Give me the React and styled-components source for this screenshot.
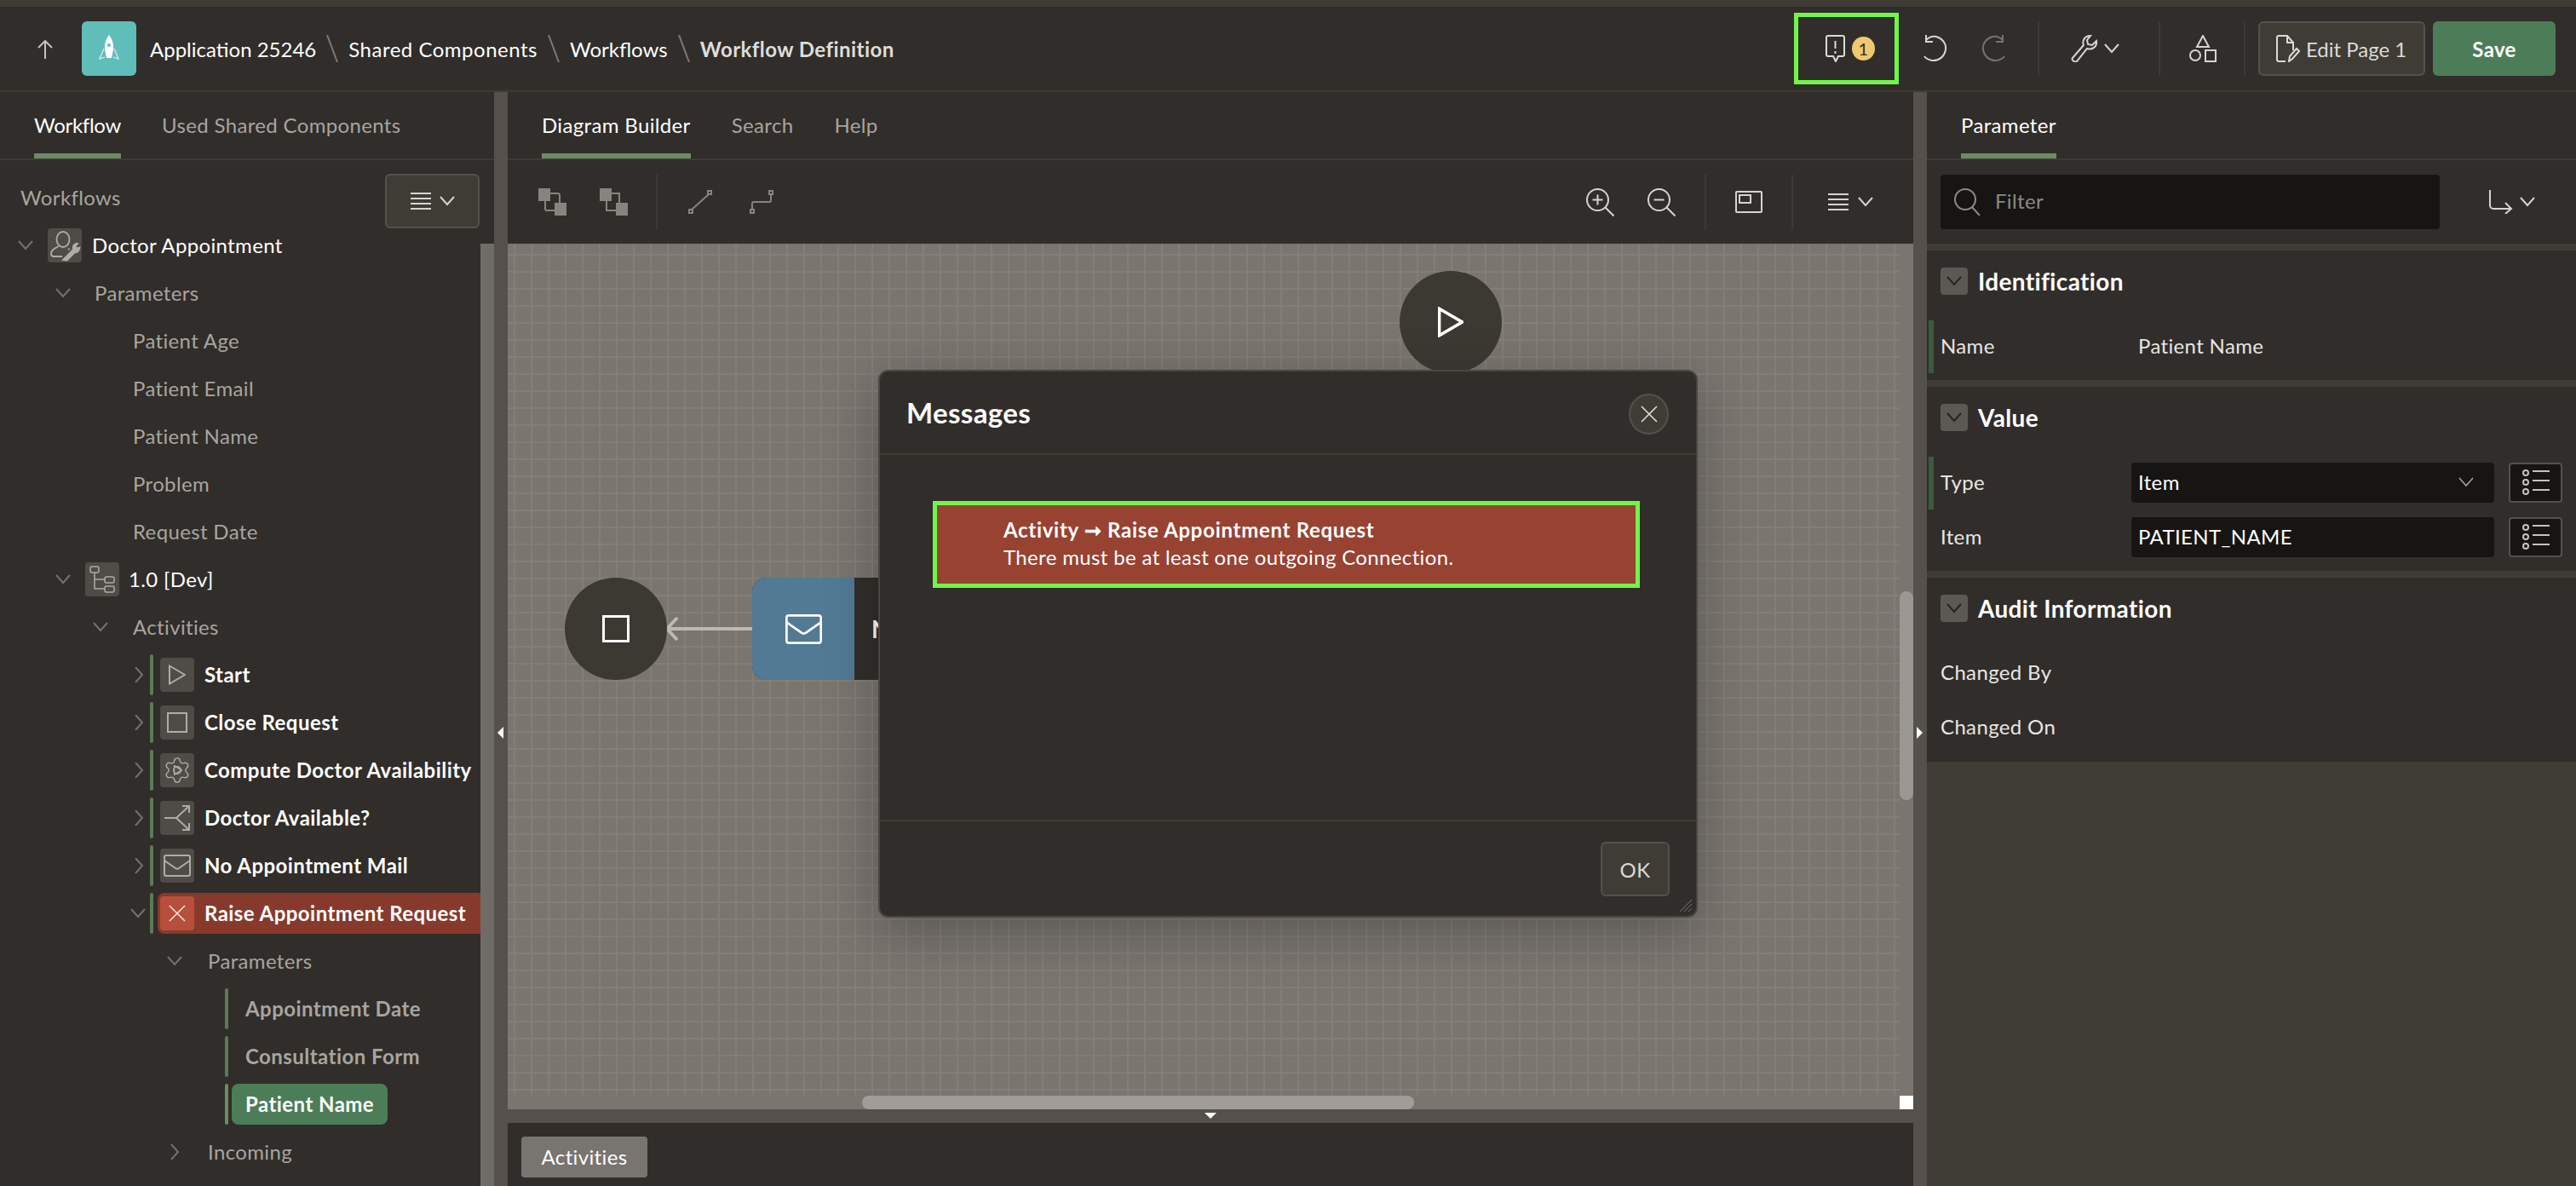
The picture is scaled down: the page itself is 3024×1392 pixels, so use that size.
import React from "react";
import styled, { createGlobalStyle } from "styled-components";
import { Settings } from "lucide-react";

const Global = createGlobalStyle`
  html, body { margin: 0; padding: 0; background: #312d2a; }
  * { box-sizing: border-box; }
  body { font-family: Lato, "Noto Sans", sans-serif; }
`;

const C = {
  bg: "#312d2a",
  line: "#3f3c36",
  split: "#55504b",
  iconBox: "#4f4b47",
  input: "#161513",
  green: "#4c7d58",
  accent: "#6d8c62",
  muted: "#a8a5a0",
  text: "#ffffff",
};

const Root = styled.div`
  position: relative;
  width: 3024px;
  height: 1392px;
  overflow: hidden;
  display: flex;
  flex-direction: column;
  background: ${C.bg};
  color: ${C.text};
  font-size: 24px;
  letter-spacing: 0.35px;
`;

const Header = styled.header`
  height: 108px;
  flex: none;
  display: flex;
  align-items: center;
  border-top: 8px solid ${C.line};
  border-bottom: 2px solid ${C.line};
  padding: 0 24px 0 43px;
`;
const BackBtn = styled.div`
  width: 20px;
  height: 20px;
  display: flex;
  color: #c4c2bf;
  margin-right: 33px;
`;
const AppIcon = styled.div`
  width: 64px;
  height: 64px;
  flex: none;
  border-radius: 6px;
  background: #5fbdba;
  display: flex;
  align-items: center;
  justify-content: center;
  margin-right: 16px;
`;
const Crumbs = styled.nav`
  display: flex;
  align-items: center;
  flex: 1;
`;
const Crumb = styled.span`
  font-weight: ${(p) => (p.$current ? 700 : 400)};
  color: ${(p) => (p.$current ? "#dfddda" : "#fff")};
  letter-spacing: ${(p) => (p.$tight ? 0 : p.$current ? 0.45 : 0.5)}px;
  white-space: nowrap;
`;
const CrumbSep = styled.span`
  width: 14px;
  height: 32px;
  margin: 0 12px;
  display: flex;
  color: #7d7974;
`;

const Tools = styled.div`
  display: flex;
  align-items: center;
  height: 64px;
`;
const AlertBox = styled.div`
  width: 123px;
  height: 84px;
  border: 5px solid #72f54a;
  display: flex;
  align-items: center;
  justify-content: flex-start;
  padding-left: 32px;
  gap: 8px;
  margin-right: 27px;
  color: #dcdad7;
`;
const Badge = styled.span`
  width: 27px;
  height: 28px;
  border-radius: 50%;
  background: #f0c872;
  color: #312d2a;
  font-size: 20px;
  display: flex;
  align-items: center;
  justify-content: center;
`;
const ToolIcon = styled.div`
  display: flex;
  align-items: center;
  color: ${(p) => (p.$dim ? "#87837e" : p.$off ? "#76726d" : "#d6d4d1")};
  margin-left: ${(p) => p.$ml || 0}px;
  gap: ${(p) => p.$gap || 0}px;
`;
const VRule = styled.div`
  width: 2px;
  height: 64px;
  background: #3d3a35;
  margin-left: ${(p) => p.$ml || 0}px;
`;
const EditBtn = styled.div`
  width: 196px;
  height: 64px;
  margin-left: 15px;
  background: #3f3c36;
  border: 2px solid #55504b;
  border-radius: 6px;
  display: flex;
  align-items: center;
  padding-left: 18px;
  gap: 7px;
  color: #dcdad7;
  letter-spacing: 0;
`;
const SaveBtn = styled.div`
  width: 144px;
  height: 64px;
  margin-left: 9px;
  background: ${C.green};
  border-radius: 6px;
  display: flex;
  align-items: center;
  justify-content: center;
  font-weight: 700;
`;

const Main = styled.main`
  flex: 1;
  display: flex;
  min-height: 0;
`;
const Splitter = styled.div`
  position: relative;
  width: 16px;
  flex: none;
  background: ${C.split};
`;
const Arrow = styled.span`
  position: absolute;
  left: ${(p) => p.$x}px;
  top: ${(p) => p.$y}px;
  width: 0;
  height: 0;
  border-style: solid;
  border-color: transparent;
  border-width: 7px;
  ${(p) => (p.$dir === "left" ? "border-right-color:#fff;border-left-width:0;" : "")}
  ${(p) => (p.$dir === "right" ? "border-left-color:#fff;border-right-width:0;" : "")}
  ${(p) => (p.$dir === "down" ? "border-top-color:#fff;border-bottom-width:0;" : "")}
`;

const LeftPane = styled.section`
  position: relative;
  width: 580px;
  flex: none;
  display: flex;
  flex-direction: column;
`;
const CenterPane = styled.section`
  width: 1650px;
  flex: none;
  display: flex;
  flex-direction: column;
`;
const RightPane = styled.section`
  flex: 1;
  display: flex;
  flex-direction: column;
  background: ${C.line};
`;

const Tabs = styled.div`
  height: 80px;
  flex: none;
  display: flex;
  border-bottom: 2px solid ${C.line};
  padding-left: ${(p) => p.$pl}px;
  gap: ${(p) => p.$gap || 48}px;
  background: ${C.bg};
`;
const Tab = styled.div`
  height: 78px;
  display: flex;
  align-items: center;
  padding-top: 4px;
  color: ${(p) => (p.$on ? "#fff" : C.muted)};
  border-bottom: 6px solid ${(p) => (p.$on ? C.accent : "transparent")};
  letter-spacing: ${(p) => (p.$narrow ? -0.3 : 0.35)}px;
  white-space: nowrap;
`;

const TreeHead = styled.div`
  height: 72px;
  flex: none;
  display: flex;
  align-items: flex-start;
  justify-content: space-between;
  padding: 16px 17px 0 24px;
  color: ${C.muted};
`;
const HeadLabel = styled.span`
  line-height: 56px;
`;
const MenuBtn = styled.div`
  width: 111px;
  height: 64px;
  background: #3f3c36;
  border: 2px solid #55504b;
  border-radius: 6px;
  display: flex;
  align-items: center;
  justify-content: center;
  gap: 10px;
  color: #d6d4d1;
`;
const Tree = styled.div`
  flex: 1;
  overflow: hidden;
`;
const Row = styled.div`
  height: 56px;
  display: flex;
  align-items: center;
  padding-left: ${(p) => p.$x}px;
  white-space: nowrap;
`;
const Twist = styled.span`
  width: 18px;
  height: 18px;
  flex: none;
  display: flex;
  align-items: center;
  justify-content: center;
  color: #75716c;
`;
const Bar = styled.span`
  width: 4px;
  height: 48px;
  flex: none;
  border-radius: 2px;
  background: ${(p) => (p.$bright ? "#6d8c62" : "#5c7a58")};
  margin-left: ${(p) => p.$gap}px;
`;
const NodeBody = styled.div`
  height: 48px;
  display: flex;
  align-items: center;
  border-radius: 8px;
  margin-left: ${(p) => p.$gap}px;
  padding: 0 ${(p) => p.$pr}px 0 ${(p) => p.$pl}px;
  background: ${(p) => p.$bg || "transparent"};
  flex: ${(p) => (p.$fill ? 1 : "none")};
`;
const NodeIcon = styled.span`
  position: relative;
  width: 40px;
  height: 40px;
  flex: none;
  border-radius: 4px;
  display: flex;
  align-items: center;
  justify-content: center;
  background: ${(p) => p.$bg || C.iconBox};
  color: ${(p) => p.$fg || "#aeaca8"};
`;
const NodeLabel = styled.span`
  margin-left: ${(p) => p.$gap}px;
  padding-bottom: 2px;
  font-weight: ${(p) => (p.$strong ? 700 : 400)};
  letter-spacing: ${(p) => (p.$strong ? 0.45 : 0.35)}px;
  color: ${(p) => (p.$muted ? C.muted : "#fff")};
`;
const TreeScroll = styled.div`
  position: absolute;
  right: 0;
  top: 178px;
  bottom: 0;
  width: 16px;
  background: #6f6b66;
`;

const Toolbar = styled.div`
  height: 98px;
  flex: none;
  display: flex;
  align-items: center;
  padding: 0 47px 0 36px;
`;
const ToolSpacer = styled.div`
  flex: 1;
`;

const Canvas = styled.div`
  position: relative;
  flex: 1;
  overflow: hidden;
  background: #7a756f;
`;
const Grid = styled.div`
  position: absolute;
  inset: 0 16px 16px 0;
  background-image:
    linear-gradient(to right, #827e78 2px, transparent 2px),
    linear-gradient(to bottom, #827e78 2px, transparent 2px);
  background-size: 20px 20px;
  background-position: 7px 12px;
`;
const Circle = styled.div`
  position: absolute;
  left: ${(p) => p.$x}px;
  top: ${(p) => p.$y}px;
  width: 120px;
  height: 120px;
  border-radius: 50%;
  background: #3c3933;
  color: #fff;
  display: flex;
  align-items: center;
  justify-content: center;
`;
const Connector = styled.svg`
  position: absolute;
  left: 184px;
  top: 432px;
`;
const FlowNode = styled.div`
  position: absolute;
  left: 287px;
  top: 392px;
  width: 420px;
  height: 120px;
  display: flex;
  border-radius: 16px;
  overflow: hidden;
  background: #322e2b;
`;
const FlowIcon = styled.div`
  width: 120px;
  flex: none;
  background: #527a94;
  color: #fff;
  display: flex;
  align-items: center;
  justify-content: center;
`;
const FlowLabel = styled.div`
  margin-left: 20px;
  line-height: 120px;
  font-size: 28px;
  font-weight: 700;
  white-space: nowrap;
`;
const ThumbH = styled.div`
  position: absolute;
  left: 416px;
  width: 648px;
  bottom: 0;
  height: 16px;
  border-radius: 8px;
  background: #a09d98;
`;
const ThumbV = styled.div`
  position: absolute;
  right: 0;
  top: 408px;
  height: 245px;
  width: 16px;
  border-radius: 8px;
  background: #9b9894;
`;
const Corner = styled.div`
  position: absolute;
  right: 0;
  bottom: 0;
  width: 16px;
  height: 16px;
  background: #fff;
`;
const HSplit = styled.div`
  position: relative;
  height: 16px;
  flex: none;
  background: ${C.split};
`;
const Drawer = styled.div`
  height: 74px;
  flex: none;
  padding: 16px 0 0 16px;
`;
const DrawerBtn = styled.div`
  width: 148px;
  height: 48px;
  border-radius: 4px;
  background: #787470;
  display: flex;
  align-items: center;
  justify-content: center;
  padding-bottom: 2px;
`;

const FilterBar = styled.div`
  height: 98px;
  flex: none;
  display: flex;
  align-items: center;
  padding-left: 16px;
  background: ${C.bg};
`;
const FilterInput = styled.div`
  width: 586px;
  height: 64px;
  border-radius: 4px;
  background: ${C.input};
  display: flex;
  align-items: center;
  padding-left: 16px;
  gap: 17px;
  color: #8c8985;
`;
const FilterText = styled.span`
  padding-bottom: 3px;
`;
const Group = styled.div`
  background: ${C.bg};
  padding: 20px 16px 8px 16px;
  margin-top: 8px;
  height: ${(p) => p.$h}px;
  flex: none;
`;
const GroupHead = styled.div`
  display: flex;
  align-items: center;
  height: 32px;
  gap: 12px;
  font-size: 28px;
  font-weight: 700;
`;
const Collapse = styled.span`
  width: 32px;
  height: 32px;
  border-radius: 4px;
  background: #5c5854;
  display: flex;
  align-items: center;
  justify-content: center;
  color: #262320;
`;
const Field = styled.div`
  position: relative;
  height: 62px;
  display: flex;
  align-items: center;
  margin-top: ${(p) => p.$mt}px;
`;
const FieldMark = styled.span`
  position: absolute;
  left: -14px;
  top: 0;
  bottom: 0;
  width: 6px;
  background: #3c5a40;
`;
const FieldLabel = styled.span`
  width: 224px;
  flex: none;
  padding-bottom: 3px;
  color: #e8e6e3;
`;
const FieldValue = styled.span`
  padding: 0 0 3px 8px;
  color: #e8e6e3;
`;
const InputBox = styled.div`
  width: 426px;
  height: 47px;
  margin-bottom: 2px;
  border-radius: 4px;
  background: ${C.input};
  display: flex;
  align-items: center;
  justify-content: space-between;
  padding: 0 24px 1px 8px;
  color: #fff;
`;
const SelectChevron = styled.span`
  display: flex;
  color: #a8a5a0;
`;
const ListBtn = styled.div`
  width: 63px;
  height: 47px;
  margin: 0 0 2px 17px;
  border-radius: 4px;
  background: ${C.input};
  border: 2px solid #55504b;
  display: flex;
  align-items: center;
  justify-content: center;
  color: #c4c2bf;
`;

const Modal = styled.div`
  position: absolute;
  left: 1031px;
  top: 434px;
  width: 962px;
  height: 643px;
  border-radius: 12px;
  border: 2px solid #4a4641;
  background: ${C.bg};
  box-shadow: 0 16px 64px rgba(0, 0, 0, 0.28);
  display: flex;
  flex-direction: column;
`;
const ModalHead = styled.div`
  height: 98px;
  flex: none;
  display: flex;
  align-items: center;
  justify-content: space-between;
  padding: 0 32px 0 31px;
  border-bottom: 2px solid ${C.line};
`;
const ModalTitle = styled.h2`
  margin: 0;
  font-size: 33px;
  font-weight: 700;
`;
const CloseBtn = styled.div`
  width: 47px;
  height: 48px;
  margin-top: 4px;
  border-radius: 50%;
  border: 2px solid #55504b;
  background: #3f3c36;
  display: flex;
  align-items: center;
  justify-content: center;
  color: #e0dedb;
`;
const ModalBody = styled.div`
  flex: 1;
  padding: 54px 66px 0 62px;
`;
const AlertRow = styled.div`
  height: 102px;
  border: 5px solid #72f54a;
  background: #984232;
  padding: 13px 0 0 78px;
  line-height: 32px;
`;
const AlertTitle = styled.div`
  font-weight: 700;
  letter-spacing: 0.7px;
`;
const ModalFoot = styled.div`
  height: 113px;
  flex: none;
  border-top: 2px solid ${C.line};
  padding: 24px 0 0 846px;
`;
const OkBtn = styled.div`
  width: 81px;
  height: 64px;
  background: #3f3c36;
  border: 2px solid #55504b;
  border-radius: 6px;
  color: #dcdad7;
  display: flex;
  align-items: center;
  justify-content: center;
`;
const Grip = styled.svg`
  position: absolute;
  right: 4px;
  bottom: 4px;
`;
const GearWrap = styled.span`
  position: relative;
  display: flex;
`;
const GearTri = styled.span`
  position: absolute;
  left: 13px;
  top: 11px;
  display: flex;
`;

const S = ({ w, h, vb, children, sw = 2, fill = "none" }) => (
  <svg width={w} height={h} viewBox={vb || `0 0 ${w} ${h}`} fill={fill} stroke="currentColor" strokeWidth={sw}>
    {children}
  </svg>
);
const ChevD = ({ w = 18, h = 12, sw = 2 }) => (
  <S w={w} h={h} vb="0 0 18 12" sw={sw}>
    <path d="M1 1l8 9 8-9" />
  </S>
);
const ChevR = () => (
  <S w={11} h={18} sw={2}>
    <path d="M1 0l8 9-8 9" />
  </S>
);
const Hamburger = () => (
  <S w={24} h={20} sw={2}>
    <path d="M0 1h24M0 7h24M0 13h24M0 19h24" />
  </S>
);
const Rocket = () => (
  <svg width="24" height="32" viewBox="0 0 24 32">
    <path d="M6 16L1 28l6-2M18 16l5 12-6-2" fill="#5fbdba" stroke="#d8f1f0" strokeWidth="1.2" />
    <path d="M12 0c4 5 5.500 11 5 17l-2 10H9L7 17C6.500 11 8 5 12 0z" fill="#fff" />
    <circle cx="12" cy="12" r="2" fill="#5fbdba" />
  </svg>
);
const PersonWrench = () => (
  <S w={40} h={40} sw={1.8}>
    <ellipse cx="18" cy="13" rx="7.500" ry="9" />
    <path d="M13 21c-4 2-9 4-9 9 0 2 1 3 3 3h10" />
    <path d="M24 24l2 1" />
    <path d="M18 37l3-3 9-9c-1-3 0-6 3-7l2 0-2.500 3.500 1.500 2 3.500-1c0 4-3 6-6 6l-9 9z" fill="currentColor" />
  </S>
);
const TreeIc = () => (
  <S w={30} h={32} sw={1.5}>
    <rect x="1" y="1" width="10" height="7" rx="2" />
    <rect x="18" y="13" width="11" height="7" rx="2" />
    <rect x="18" y="24" width="11" height="7" rx="2" />
    <path d="M6 8v19h12M6 16h12" />
  </S>
);
const PlayIc = ({ w = 20, h = 24, sw = 2 }) => (
  <S w={w} h={h} vb="0 0 20 24" sw={sw}>
    <path d="M1 1.500L19 12 1 22.500z" />
  </S>
);
const SquareIc = ({ s = 24, sw = 2 }) => (
  <S w={s} h={s} vb="0 0 24 24" sw={sw}>
    <rect x="1" y="1" width="22" height="22" />
  </S>
);
const GearPlay = () => (
  <GearWrap>
    <Settings size={34} strokeWidth={1} />
    <GearTri>
      <S w={10} h={12} vb="0 0 20 24" sw={3}>
        <path d="M1 1.500L19 12 1 22.500z" />
      </S>
    </GearTri>
  </GearWrap>
);
const Branch = () => (
  <S w={32} h={32} sw={2}>
    <path d="M1 16h14L30 2M15 16l15 14M22 2h8v8M22 30h8v-8" />
  </S>
);
const Mail = ({ w = 32, h = 26, sw = 2 }) => (
  <S w={w} h={h} vb="0 0 32 26" sw={sw}>
    <rect x="1" y="1" width="30" height="24" rx="2" />
    <path d="M1 7l13 9c1 1 3 1 4 0l13-9" />
  </S>
);
const XIc = ({ s = 20, sw = 1.6 }) => (
  <S w={s} h={s} vb="0 0 20 20" sw={sw}>
    <path d="M1 1l18 18M19 1L1 19" />
  </S>
);

const tree = [
  { x: 21, twist: "d", icon: <PersonWrench />, body: 17, label: "Doctor Appointment", gap: 12 },
  { x: 65, twist: "d", label: "Parameters", muted: 1, gap: 28 },
  { x: 156, label: "Patient Age", muted: 1 },
  { x: 156, label: "Patient Email", muted: 1 },
  { x: 156, label: "Patient Name", muted: 1 },
  { x: 156, label: "Problem", muted: 1 },
  { x: 156, label: "Request Date", muted: 1 },
  { x: 65, twist: "d", icon: <TreeIc />, body: 17, label: "1.0 [Dev]", gap: 11 },
  { x: 109, twist: "d", label: "Activities", muted: 1, gap: 29 },
  { x: 154, twist: "r", bar: 4, icon: <PlayIc />, body: 8, label: "Start", strong: 1, gap: 12 },
  { x: 154, twist: "r", bar: 4, icon: <SquareIc s={24} />, body: 8, label: "Close Request", strong: 1, gap: 12 },
  { x: 154, twist: "r", bar: 4, icon: <GearPlay />, body: 8, label: "Compute Doctor Availability", strong: 1, gap: 12 },
  { x: 154, twist: "r", bar: 4, icon: <Branch />, body: 8, label: "Doctor Available?", strong: 1, gap: 12 },
  { x: 154, twist: "r", bar: 4, icon: <Mail />, body: 8, label: "No Appointment Mail", strong: 1, gap: 12 },
  { x: 153, twist: "d", bar: 5, icon: <XIc />, iconBg: "#b84f3c", iconFg: "#f6e3df", body: 5, pad: 3, fill: 1, bg: "#873a2c", label: "Raise Appointment Request", strong: 1, gap: 12 },
  { x: 196, twist: "d", label: "Parameters", muted: 1, gap: 30 },
  { x: 246, bar: 18, body: 4, pad: 16, label: "Appointment Date", muted: 1, strong: 1 },
  { x: 246, bar: 18, body: 4, pad: 16, label: "Consultation Form", muted: 1, strong: 1 },
  { x: 246, bar: 18, body: 4, pad: 16, pr: 16, bg: C.green, label: "Patient Name", strong: 1 },
  { x: 196, twist: "r", label: "Incoming", muted: 1, gap: 30 },
];

const TreeRow = ({ n }) => (
  <Row $x={n.x}>
    {n.twist && <Twist>{n.twist === "d" ? <ChevD /> : <ChevR />}</Twist>}
    {n.bar !== undefined && <Bar $gap={n.bar} $bright={n.bg === C.green} />}
    <NodeBody $gap={n.body || 0} $pl={n.pad || 0} $pr={n.pr || 0} $bg={n.bg} $fill={n.fill}>
      {n.icon && (
        <NodeIcon $bg={n.iconBg} $fg={n.iconFg}>
          {n.icon}
        </NodeIcon>
      )}
      <NodeLabel $gap={n.gap || 0} $muted={n.muted} $strong={n.strong}>
        {n.label}
      </NodeLabel>
    </NodeBody>
  </Row>
);

const ListIc = () => (
  <S w={32} h={30} sw={2}>
    <circle cx="4" cy="4" r="3" />
    <circle cx="4" cy="15" r="3" />
    <circle cx="4" cy="26" r="3" />
    <path d="M12 2h20M12 13h20M12 24h20" />
  </S>
);

const Sep = () => (
  <CrumbSep>
    <S w={14} h={32}>
      <path d="M1 0l12 32" />
    </S>
  </CrumbSep>
);

export default function App() {
  return (
    <Root>
      <Global />
      <Header>
        <BackBtn>
          <S w={20} h={22}>
            <path d="M10 22V2M2 9l8-8 8 8" />
          </S>
        </BackBtn>
        <AppIcon>
          <Rocket />
        </AppIcon>
        <Crumbs>
          <Crumb $tight>Application 25246</Crumb>
          <Sep />
          <Crumb>Shared Components</Crumb>
          <Sep />
          <Crumb $tight>Workflows</Crumb>
          <Sep />
          <Crumb $current>Workflow Definition</Crumb>
        </Crumbs>
        <Tools>
          <AlertBox>
            <S w={23} h={32}>
              <path d="M3 1h17a2 2 0 0 1 2 2v20a2 2 0 0 1-2 2h-5l-3 6-3-6H3a2 2 0 0 1-2-2V3a2 2 0 0 1 2-2z" />
              <path d="M11.500 7v9M11.500 19v3" />
            </S>
            <Badge>1</Badge>
          </AlertBox>
          <ToolIcon>
            <S w={30} h={32}>
              <path d="M5 6C9 2 13 1 17 2c7 2 12 8 11 15-1 8-8 14-16 13-4-1-7-2-9-5" />
              <path d="M5 0v8h8" />
            </S>
          </ToolIcon>
          <ToolIcon $off $ml={40}>
            <S w={30} h={32}>
              <path d="M25 6C21 2 17 1 13 2 6 4 1 10 2 17c1 8 8 14 16 13 4-1 7-2 9-5" />
              <path d="M25 0v8h-8" />
            </S>
          </ToolIcon>
          <VRule $ml={36} />
          <ToolIcon $ml={37} $gap={6}>
            <S w={33} h={32}>
              <path d="M2 27L15 12c-2-5 1-11 8-11l-4 5 1 5 5 1 5-5c1 7-5 11-11 9L7 31c-2 2-7-2-5-4z" />
            </S>
            <ChevD />
          </ToolIcon>
          <VRule $ml={46} />
          <ToolIcon $ml={34}>
            <S w={32} h={32}>
              <path d="M16 1l7 13H9z" />
              <circle cx="7" cy="24" r="6" />
              <rect x="19" y="18" width="12" height="13" />
            </S>
          </ToolIcon>
          <VRule $ml={32} />
          <EditBtn>
            <S w={29} h={32}>
              <path d="M12 31H4a2 2 0 0 1-2-2V3a2 2 0 0 1 2-2h10l7 8v9M14 1v8h7" />
              <path d="M16 31l1-6 8-9 3 3-8 9z" />
            </S>
            Edit Page 1
          </EditBtn>
          <SaveBtn>Save</SaveBtn>
        </Tools>
      </Header>
      <Main>
        <LeftPane>
          <Tabs $pl={40}>
            <Tab $on $narrow>Workflow</Tab>
            <Tab>Used Shared Components</Tab>
          </Tabs>
          <TreeHead>
            <HeadLabel>Workflows</HeadLabel>
            <MenuBtn>
              <Hamburger />
              <ChevD />
            </MenuBtn>
          </TreeHead>
          <Tree>
            {tree.map((n, i) => (
              <TreeRow key={i} n={n} />
            ))}
          </Tree>
          <TreeScroll />
        </LeftPane>
        <Splitter>
          <Arrow $dir="left" $x={4} $y={745} />
        </Splitter>
        <CenterPane>
          <Tabs $pl={40}>
            <Tab $on>Diagram Builder</Tab>
            <Tab>Search</Tab>
            <Tab>Help</Tab>
          </Tabs>
          <Toolbar>
            <ToolIcon $dim>
              <S w={33} h={32}>
                <path d="M10 6h13a2 2 0 0 1 2 2v12M23 26H10a2 2 0 0 1-2-2V12" />
                <rect x="1" y="0" width="12" height="14" fill="currentColor" />
                <rect x="20" y="18" width="13" height="14" fill="currentColor" />
              </S>
            </ToolIcon>
            <ToolIcon $dim $ml={39}>
              <S w={33} h={32}>
                <rect x="1" y="0" width="12" height="14" fill="currentColor" />
                <rect x="20" y="18" width="13" height="14" fill="currentColor" />
                <path d="M13 6h10v12M20 26H8V14" />
              </S>
            </ToolIcon>
            <VRule $ml={33} />
            <ToolIcon $dim $ml={36}>
              <S w={28} h={28}>
                <rect x="1" y="23" width="4" height="4" />
                <rect x="23" y="1" width="4" height="4" />
                <path d="M4 23L24 5" />
              </S>
            </ToolIcon>
            <ToolIcon $dim $ml={44}>
              <S w={28} h={28}>
                <rect x="1" y="23" width="4" height="4" />
                <rect x="23" y="1" width="4" height="4" />
                <path d="M3 23v-7a2 2 0 0 1 2-2h18a2 2 0 0 0 2-2V5" />
              </S>
            </ToolIcon>
            <ToolSpacer />
            <ToolIcon>
              <S w={33} h={33}>
                <circle cx="13.500" cy="13.500" r="12.500" />
                <path d="M22.500 22.500l10 10M7.500 13.500h12M13.500 7.500v12" />
              </S>
            </ToolIcon>
            <ToolIcon $ml={39}>
              <S w={33} h={33}>
                <circle cx="13.500" cy="13.500" r="12.500" />
                <path d="M22.500 22.500l10 10M7.500 13.500h12" />
              </S>
            </ToolIcon>
            <VRule $ml={34} />
            <ToolIcon $ml={34}>
              <S w={32} h={26}>
                <rect x="1" y="1" width="30" height="24" rx="1" />
                <rect x="5" y="5" width="13" height="9" />
              </S>
            </ToolIcon>
            <VRule $ml={34} />
            <ToolIcon $ml={41} $gap={11}>
              <Hamburger />
              <ChevD />
            </ToolIcon>
          </Toolbar>
          <Canvas>
            <Grid />
            <Circle $x={1047} $y={32}>
              <PlayIc w={30} h={36} sw={2.5} />
            </Circle>
            <Connector width="106" height="40" viewBox="0 0 106 40" fill="none" stroke="#bcb8b2" strokeWidth="4">
              <path d="M3 20h102M15 7L3 20l12 13" />
            </Connector>
            <Circle $x={67} $y={392}>
              <SquareIc s={32} sw={2.5} />
            </Circle>
            <FlowNode>
              <FlowIcon>
                <Mail w={43} h={35} sw={2} />
              </FlowIcon>
              <FlowLabel>No Appointment Mail</FlowLabel>
            </FlowNode>
            <ThumbH />
            <ThumbV />
            <Corner />
          </Canvas>
          <HSplit>
            <Arrow $dir="down" $x={818} $y={4} />
          </HSplit>
          <Drawer>
            <DrawerBtn>Activities</DrawerBtn>
          </Drawer>
        </CenterPane>
        <Splitter>
          <Arrow $dir="right" $x={4} $y={745} />
        </Splitter>
        <RightPane>
          <Tabs $pl={40}>
            <Tab $on>Parameter</Tab>
          </Tabs>
          <FilterBar>
            <FilterInput>
              <S w={31} h={32}>
                <circle cx="13" cy="13" r="12" />
                <path d="M21 22l9 10" />
              </S>
              <FilterText>Filter</FilterText>
            </FilterInput>
            <ToolIcon $ml={57} $gap={8}>
              <S w={29} h={28}>
                <path d="M2 0v18a4 4 0 0 0 4 4h21M20 15l7 7-7 6" />
              </S>
              <ChevD />
            </ToolIcon>
          </FilterBar>
          <Group $h={152}>
            <GroupHead>
              <Collapse>
                <ChevD />
              </Collapse>
              Identification
            </GroupHead>
            <Field $mt={30}>
              <FieldMark />
              <FieldLabel>Name</FieldLabel>
              <FieldValue>Patient Name</FieldValue>
            </Field>
          </Group>
          <Group $h={216}>
            <GroupHead>
              <Collapse>
                <ChevD />
              </Collapse>
              Value
            </GroupHead>
            <Field $mt={30}>
              <FieldMark />
              <FieldLabel>Type</FieldLabel>
              <InputBox>
                Item
                <SelectChevron>
                  <ChevD sw={1.5} />
                </SelectChevron>
              </InputBox>
              <ListBtn>
                <ListIc />
              </ListBtn>
            </Field>
            <Field $mt={2}>
              <FieldLabel>Item</FieldLabel>
              <InputBox>PATIENT_NAME</InputBox>
              <ListBtn>
                <ListIc />
              </ListBtn>
            </Field>
          </Group>
          <Group $h={216}>
            <GroupHead>
              <Collapse>
                <ChevD />
              </Collapse>
              Audit Information
            </GroupHead>
            <Field $mt={29}>
              <FieldLabel>Changed By</FieldLabel>
            </Field>
            <Field $mt={2}>
              <FieldLabel>Changed On</FieldLabel>
            </Field>
          </Group>
        </RightPane>
      </Main>
      <Modal>
        <ModalHead>
          <ModalTitle>Messages</ModalTitle>
          <CloseBtn>
            <XIc s={20} sw={1.6} />
          </CloseBtn>
        </ModalHead>
        <ModalBody>
          <AlertRow>
            <AlertTitle>Activity ➞ Raise Appointment Request</AlertTitle>
            <div>There must be at least one outgoing Connection.</div>
          </AlertRow>
        </ModalBody>
        <ModalFoot>
          <OkBtn>OK</OkBtn>
        </ModalFoot>
        <Grip width="16" height="16" viewBox="0 0 16 16" stroke="#77736e" strokeWidth="1">
          <path d="M15 1L1 15M15 6L6 15M15 11l-4 4" />
        </Grip>
      </Modal>
    </Root>
  );
}
